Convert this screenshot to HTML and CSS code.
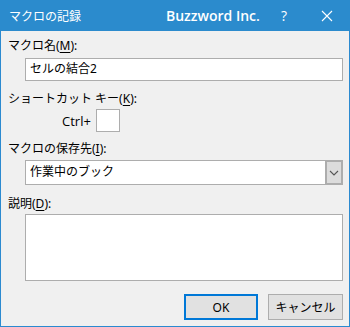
FILE: index.html
```html
<!DOCTYPE html>
<html lang="ja">
<head>
    <meta charset="UTF-8">
    <title>マクロの記録</title>
    <link rel="stylesheet" href="styles.css">
</head>
<body>
    <div class="window">
        <!-- Title bar -->
        <div class="titlebar">
            <span class="title">マクロの記録</span>
            <span class="brand">Buzzword Inc.</span>
            <span class="help">?</span>
            <span class="close">
                <svg width="12" height="12" viewBox="0 0 12 12">
                    <path d="M1 1 L11 11 M11 1 L1 11" stroke="#fff" stroke-width="1.1" fill="none"/>
                </svg>
            </span>
        </div>

        <div class="content">
            <div class="label first">マクロ名(<u>M</u>):</div>
            <div class="field name-field">セルの結合2</div>

            <div class="label shortcut-label">ショートカット キー(<u>K</u>):</div>
            <div class="shortcut-row">
                <span class="ctrl">Ctrl+</span>
                <span class="key-box"></span>
            </div>

            <div class="label store-label">マクロの保存先(<u>I</u>):</div>
            <div class="select">
                <span class="select-text">作業中のブック</span>
                <span class="select-btn">
                    <svg width="10" height="6" viewBox="0 0 10 6">
                        <path d="M1 1 L5 5 L9 1" stroke="#555" stroke-width="1.1" fill="none"/>
                    </svg>
                </span>
            </div>

            <div class="label desc-label">説明(<u>D</u>):</div>
            <div class="desc"></div>

            <div class="buttons">
                <button class="btn ok">OK</button>
                <button class="btn">キャンセル</button>
            </div>
        </div>
    </div>
</body>
</html>
```

FILE: styles.css
```css
* {
    box-sizing: border-box;
}

body {
    margin: 0;
    font-family: "Noto Sans", "Noto Sans CJK JP", sans-serif;
    font-size: 12px;
    color: #000;
}

.window {
    width: 350px;
    height: 327px;
    background: #f0f0f0;
    border: 1px solid #2b8ad0;
    border-top: none;
}

.titlebar {
    height: 31px;
    background: #2b8bcd;
    color: #fff;
    display: flex;
    align-items: center;
    margin: 0 -1px;
    padding-left: 9px;
}

.title {
    font-size: 12px;
    width: 157px;
}

.brand {
    font-family: "Open Sans", "Noto Sans", sans-serif;
    font-weight: 600;
    font-size: 14px;
    width: 115px;
}

.help {
    font-family: "Open Sans", sans-serif;
    font-size: 14px;
    width: 40px;
}

.close {
    display: flex;
    align-items: center;
}

.content {
    padding: 0 6px 0 7px;
}

.label {
    line-height: 16px;
    height: 16px;
}

.label u {
    text-decoration-thickness: 1px;
    text-underline-offset: 2px;
}

.first {
    margin-top: 7px;
}

.field {
    margin: 4px 0 0 17px;
    height: 23px;
    background: #fff;
    border: 1px solid #adadad;
    padding-left: 4px;
    line-height: 20px;
}

.shortcut-label {
    margin-top: 10px;
}

.shortcut-row {
    display: flex;
    align-items: center;
    margin: 2px 0 0 54px;
}

.ctrl {
    font-family: "Open Sans", "Noto Sans", sans-serif;
    font-size: 13px;
    width: 34px;
}

.key-box {
    width: 24px;
    height: 23px;
    background: #fff;
    border: 1px solid #adadad;
}

.store-label {
    margin-top: 9px;
}

.select {
    display: flex;
    margin: 3px 0 0 17px;
    height: 25px;
    background: #fff;
    border: 1px solid #adadad;
}

.select-text {
    flex: 1;
    padding-left: 4px;
    line-height: 22px;
}

.select-btn {
    width: 18px;
    margin: -1px -1px -1px 0;
    background: #dcdcdc;
    border: 2px solid #adadad;
    display: flex;
    align-items: center;
    justify-content: center;
}

.desc-label {
    margin-top: 11px;
}

.desc {
    margin: 2px 0 0 17px;
    height: 67px;
    background: #fff;
    border: 1px solid #adadad;
}

.buttons {
    display: flex;
    justify-content: flex-end;
    gap: 10px;
    margin-top: 13px;
}

.btn {
    width: 75px;
    height: 26px;
    background: #e1e1e1;
    border: 1px solid #adadad;
    font-family: "Noto Sans", "Noto Sans CJK JP", sans-serif;
    font-size: 12px;
    color: #000;
    padding: 0;
}

.btn.ok {
    width: 74px;
    border: 2px solid #0078d7;
}
```
